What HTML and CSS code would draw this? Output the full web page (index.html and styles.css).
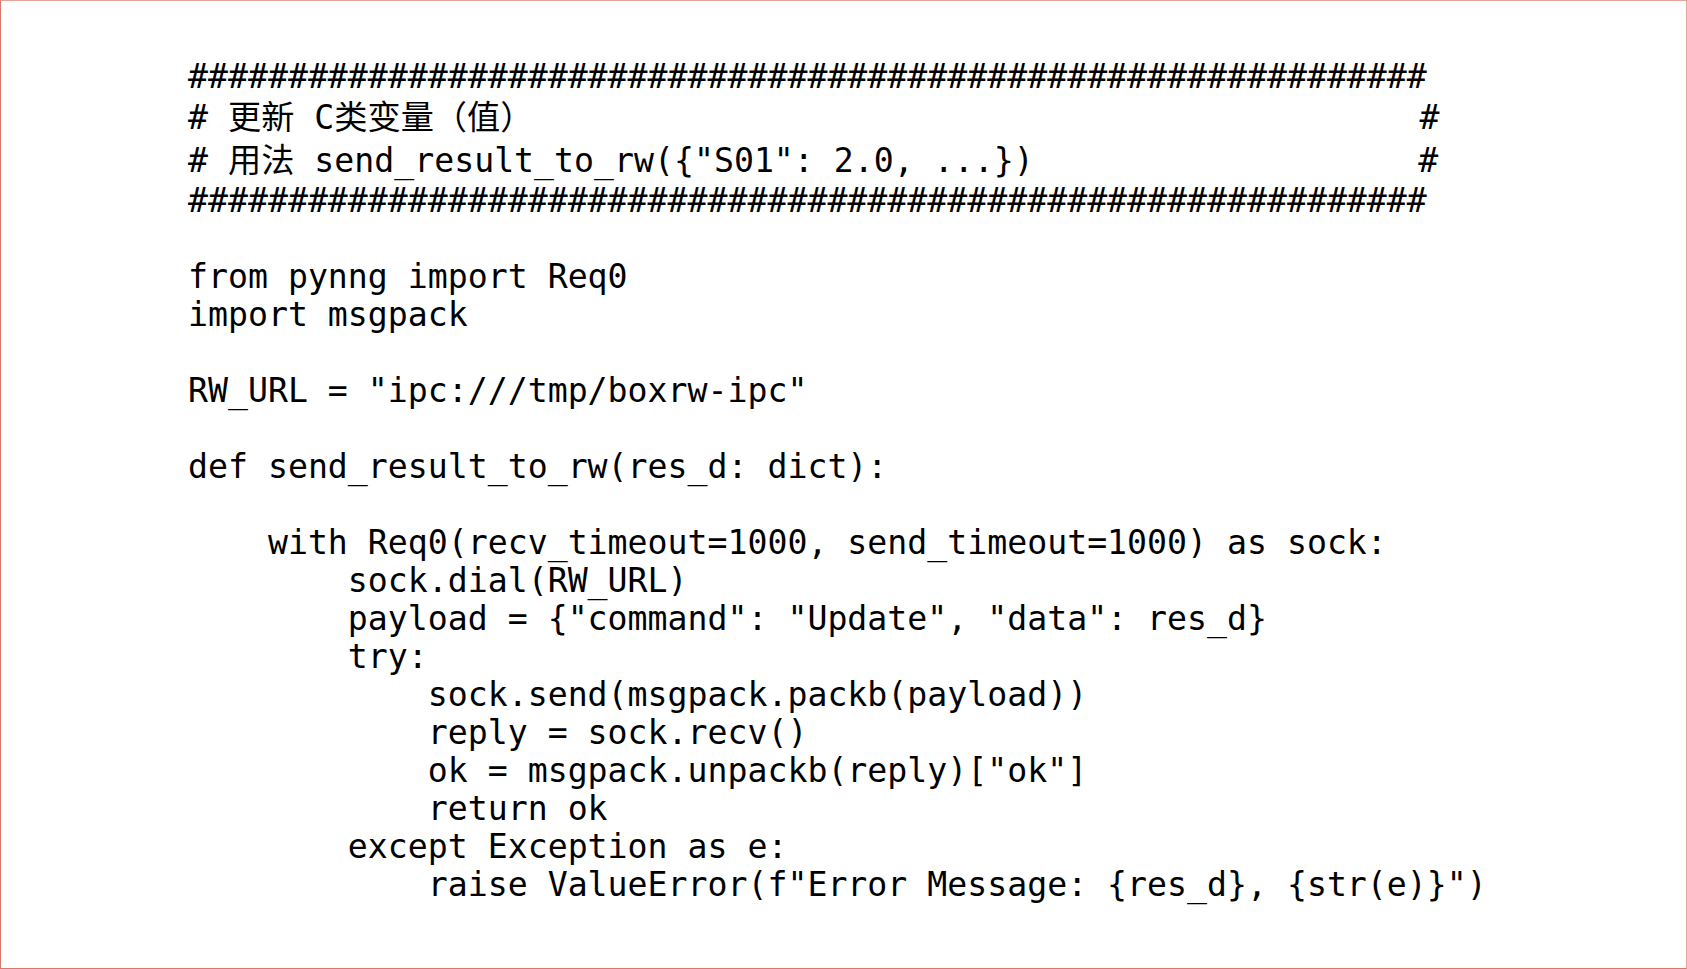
FILE: index.html
```html
<!DOCTYPE html>
<html>
<head>
<meta charset="utf-8">
<link rel="stylesheet" href="styles.css">
</head>
<body>
<div class="frame">
  <div class="code">
    <div class="ln">##############################################################</div>
    <div class="ln cjk"># 更新 C类变量（值）                                            <span class="tail tail-wide">#</span></div>
    <div class="ln cjk"># 用法 send_result_to_rw({"S01": 2.0, ...})                   <span class="tail">#</span></div>
    <div class="ln">##############################################################</div>
    <div class="ln blank"></div>
    <div class="ln">from pynng import Req0</div>
    <div class="ln">import msgpack</div>
    <div class="ln blank"></div>
    <div class="ln">RW_URL = "ipc:///tmp/boxrw-ipc"</div>
    <div class="ln blank"></div>
    <div class="ln">def send_result_to_rw(res_d: dict):</div>
    <div class="ln blank"></div>
    <div class="ln">    with Req0(recv_timeout=1000, send_timeout=1000) as sock:</div>
    <div class="ln">        sock.dial(RW_URL)</div>
    <div class="ln">        payload = {"command": "Update", "data": res_d}</div>
    <div class="ln">        try:</div>
    <div class="ln">            sock.send(msgpack.packb(payload))</div>
    <div class="ln">            reply = sock.recv()</div>
    <div class="ln">            ok = msgpack.unpackb(reply)["ok"]</div>
    <div class="ln">            return ok</div>
    <div class="ln">        except Exception as e:</div>
    <div class="ln">            raise ValueError(f"Error Message: {res_d}, {str(e)}")</div>
  </div>
</div>
</body>
</html>
```
FILE: styles.css
```css
html, body {
  margin: 0;
  padding: 0;
  background: #ffffff;
}
.frame {
  box-sizing: border-box;
  width: 100vw;
  height: 100vh;
  border: 1px solid #d9776b;
  border-top-color: #e4a39b;
  border-right-color: #e4a39b;
  background: #ffffff;
  padding: 57px 0 0 187px;
  overflow: hidden;
}
.code {
  font-family: "DejaVu Sans Mono", "Noto Sans CJK SC", monospace;
  font-size: 33.2px;
  line-height: 38px;
  color: #000000;
}
.ln {
  white-space: pre;
  height: 38px;
}
.ln.cjk {
  height: 43px;
  line-height: 43px;
}
.tail {
  margin-left: 5px;
}
.tail-wide {
  margin-left: 7px;
}
```
